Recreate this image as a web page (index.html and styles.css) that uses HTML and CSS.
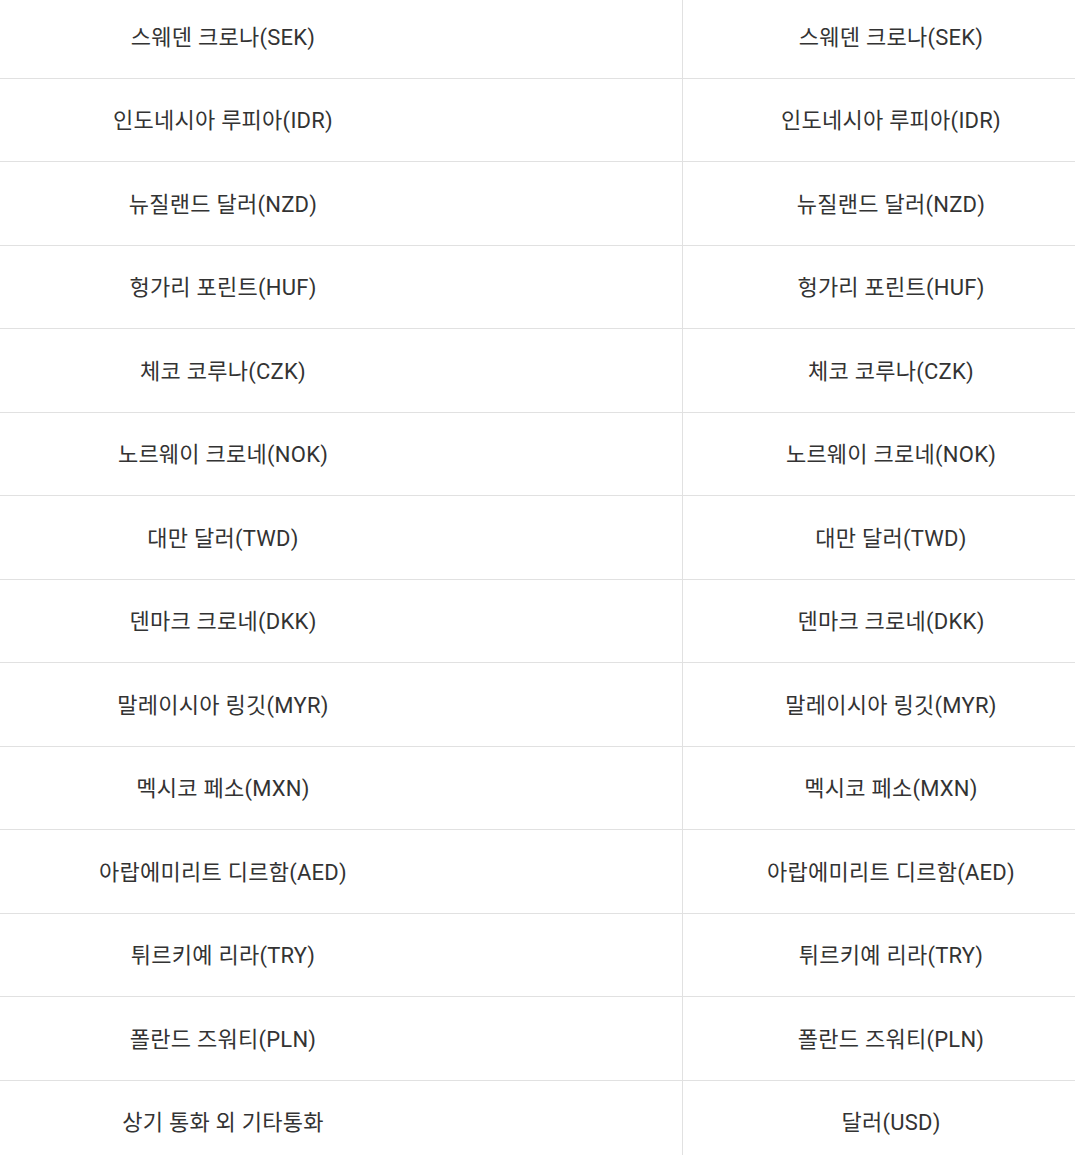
FILE: index.html
```html
<!DOCTYPE html>
<html lang="ko">
<head>
<meta charset="utf-8">
<link rel="stylesheet" href="styles.css">
</head>
<body>
<div class="table">
  <div class="row"><div class="cell left">스웨덴 크로나(SEK)</div><div class="cell right">스웨덴 크로나(SEK)</div></div>
  <div class="row"><div class="cell left">인도네시아 루피아(IDR)</div><div class="cell right">인도네시아 루피아(IDR)</div></div>
  <div class="row"><div class="cell left">뉴질랜드 달러(NZD)</div><div class="cell right">뉴질랜드 달러(NZD)</div></div>
  <div class="row"><div class="cell left">헝가리 포린트(HUF)</div><div class="cell right">헝가리 포린트(HUF)</div></div>
  <div class="row"><div class="cell left">체코 코루나(CZK)</div><div class="cell right">체코 코루나(CZK)</div></div>
  <div class="row"><div class="cell left">노르웨이 크로네(NOK)</div><div class="cell right">노르웨이 크로네(NOK)</div></div>
  <div class="row"><div class="cell left">대만 달러(TWD)</div><div class="cell right">대만 달러(TWD)</div></div>
  <div class="row"><div class="cell left">덴마크 크로네(DKK)</div><div class="cell right">덴마크 크로네(DKK)</div></div>
  <div class="row"><div class="cell left">말레이시아 링깃(MYR)</div><div class="cell right">말레이시아 링깃(MYR)</div></div>
  <div class="row"><div class="cell left">멕시코 페소(MXN)</div><div class="cell right">멕시코 페소(MXN)</div></div>
  <div class="row"><div class="cell left">아랍에미리트 디르함(AED)</div><div class="cell right">아랍에미리트 디르함(AED)</div></div>
  <div class="row"><div class="cell left">튀르키예 리라(TRY)</div><div class="cell right">튀르키예 리라(TRY)</div></div>
  <div class="row"><div class="cell left">폴란드 즈워티(PLN)</div><div class="cell right">폴란드 즈워티(PLN)</div></div>
  <div class="row"><div class="cell left">상기 통화 외 기타통화</div><div class="cell right">달러(USD)</div></div>
</div>
</body>
</html>
```
FILE: styles.css
```css
html, body {
  margin: 0;
  padding: 0;
  background: #fff;
  overflow: hidden;
}
body {
  font-family: Roboto, "Noto Sans CJK KR", sans-serif;
  color: #333;
}
.table {
  margin-top: -5px;
}
.row {
  display: grid;
  grid-template-columns: 683px 1fr;
  height: 83.5px;
  box-sizing: border-box;
  border-bottom: 1px solid #e1e1e1;
}
.cell {
  display: flex;
  align-items: center;
  justify-content: center;
  font-size: 22px;
  letter-spacing: 0.25px;
  white-space: nowrap;
  padding-bottom: 3px;
}
.left {
  border-right: 1px solid #e1e1e1;
  padding-right: 236px;
}
.right {
  padding-left: 24px;
}
```
